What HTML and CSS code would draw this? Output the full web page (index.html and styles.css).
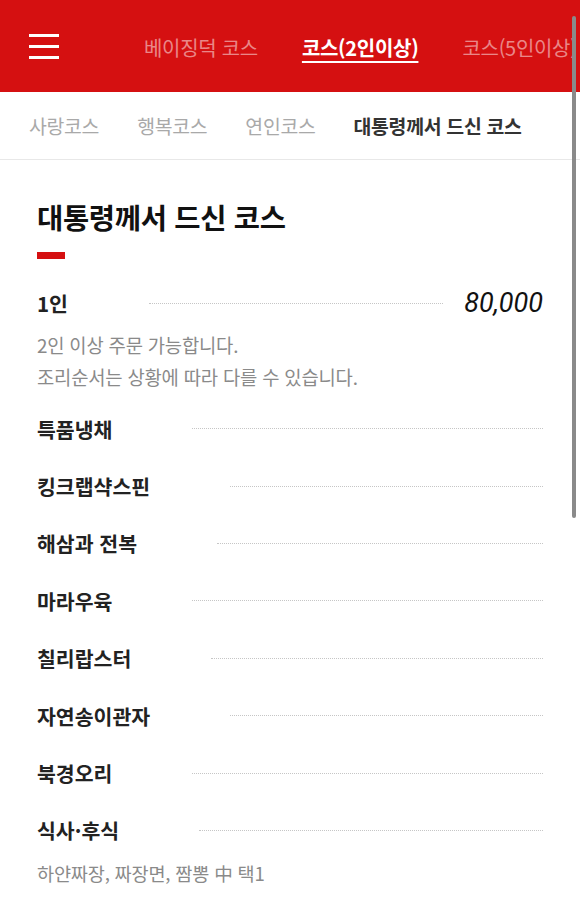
FILE: index.html
```html
<!DOCTYPE html>
<html lang="ko">
<head>
<meta charset="utf-8">
<title>대통령께서 드신 코스</title>
<link rel="stylesheet" href="styles.css">
</head>
<body>
<header class="topbar">
  <div class="burger"><span></span><span></span><span></span></div>
  <nav class="mainnav">
    <span class="mn">베이징덕 코스</span>
    <span class="mn active">코스(2인이상)</span>
    <span class="mn">코스(5인이상)</span>
  </nav>
</header>
<div class="tabs">
  <span class="tab">사랑코스</span>
  <span class="tab">행복코스</span>
  <span class="tab">연인코스</span>
  <span class="tab on">대통령께서 드신 코스</span>
</div>
<main class="content">
  <h1 class="title">대통령께서 드신 코스</h1>
  <div class="redbar"></div>
  <div class="pricerow">
    <span class="plabel">1인</span>
    <span class="dots pdots"></span>
    <span class="price">80,000</span>
  </div>
  <p class="desc">2인 이상 주문 가능합니다.<br>조리순서는 상황에 따라 다를 수 있습니다.</p>
  <ul class="items">
    <li class="item"><span class="ilabel">특품냉채</span><span class="dots"></span></li>
    <li class="item"><span class="ilabel">킹크랩샥스핀</span><span class="dots"></span></li>
    <li class="item"><span class="ilabel">해삼과 전복</span><span class="dots"></span></li>
    <li class="item"><span class="ilabel">마라우육</span><span class="dots"></span></li>
    <li class="item"><span class="ilabel">칠리랍스터</span><span class="dots"></span></li>
    <li class="item"><span class="ilabel">자연송이관자</span><span class="dots"></span></li>
    <li class="item"><span class="ilabel">북경오리</span><span class="dots"></span></li>
    <li class="item"><span class="ilabel">식사·후식</span><span class="dots"></span></li>
  </ul>
  <p class="note">하얀짜장, 짜장면, 짬뽕 中 택1</p>
</main>
<div class="scrollbar"></div>
</body>
</html>
```
FILE: styles.css
```css
html, body {
  margin: 0;
  padding: 0;
  background: #fff;
}
body {
  font-family: "Noto Sans CJK KR", "Noto Sans", sans-serif;
  width: 580px;
  height: 907px;
  overflow: hidden;
  position: relative;
}
.topbar {
  height: 92px;
  background: #d51011;
  display: flex;
  align-items: center;
  overflow: hidden;
}
.burger {
  margin-left: 29px;
  width: 30px;
  display: flex;
  flex-direction: column;
  gap: 8px;
  flex: none;
}
.burger span {
  display: block;
  height: 3px;
  background: #fff;
}
.mainnav {
  margin-left: 85px;
  display: flex;
  gap: 44px;
  white-space: nowrap;
  font-size: 20px;
  letter-spacing: -0.3px;
  margin-top: 2px;
}
.mn {
  color: rgba(255,255,255,0.5);
  flex: none;
}
.mn.active {
  color: #fff;
  font-weight: 700;
  text-decoration: underline;
  text-decoration-thickness: 2px;
  text-underline-offset: 5px;
}
.tabs {
  height: 67px;
  border-bottom: 1px solid #e8e8e8;
  display: flex;
  align-items: center;
  gap: 38px;
  padding-left: 29px;
  white-space: nowrap;
  font-size: 19.4px;
  letter-spacing: -0.3px;
}
.tab {
  color: #a9a9a9;
}
.tab.on {
  color: #333;
  font-weight: 700;
}
.content {
  padding: 0 37px;
}
.title {
  margin: 38px 0 0;
  font-size: 28.5px;
  line-height: 38px;
  font-weight: 700;
  color: #111;
  letter-spacing: -0.3px;
}
.redbar {
  margin-top: 16px;
  width: 28px;
  height: 7px;
  background: #d51011;
}
.pricerow {
  margin-top: 24px;
  height: 40px;
  display: flex;
  align-items: center;
}
.plabel, .ilabel {
  font-size: 20.5px;
  font-weight: 700;
  color: #222;
  white-space: nowrap;
}
.dots {
  flex: 1;
  height: 0;
  border-top: 1px dotted #c6c6c6;
  margin-left: 80px;
}
.pdots {
  margin-left: 81px;
  margin-right: 21px;
}
.price {
  font-family: Roboto, "Liberation Sans", sans-serif;
  font-style: italic;
  font-size: 27px;
  color: #111;
}
.desc {
  margin: 6px 0 0;
  font-size: 18.8px;
  line-height: 32px;
  color: #8a8a8a;
  letter-spacing: -0.2px;
}
.items {
  list-style: none;
  margin: 7px 0 0;
  padding: 0;
}
.item {
  height: 57.4px;
  display: flex;
  align-items: center;
}
.note {
  margin: 0;
  font-size: 18.6px;
  line-height: 28px;
  color: #8a8a8a;
  letter-spacing: -0.2px;
}
.scrollbar {
  position: absolute;
  right: 4px;
  top: 16px;
  width: 4px;
  height: 502px;
  border-radius: 2px;
  background: #8a8a8a;
}
```
